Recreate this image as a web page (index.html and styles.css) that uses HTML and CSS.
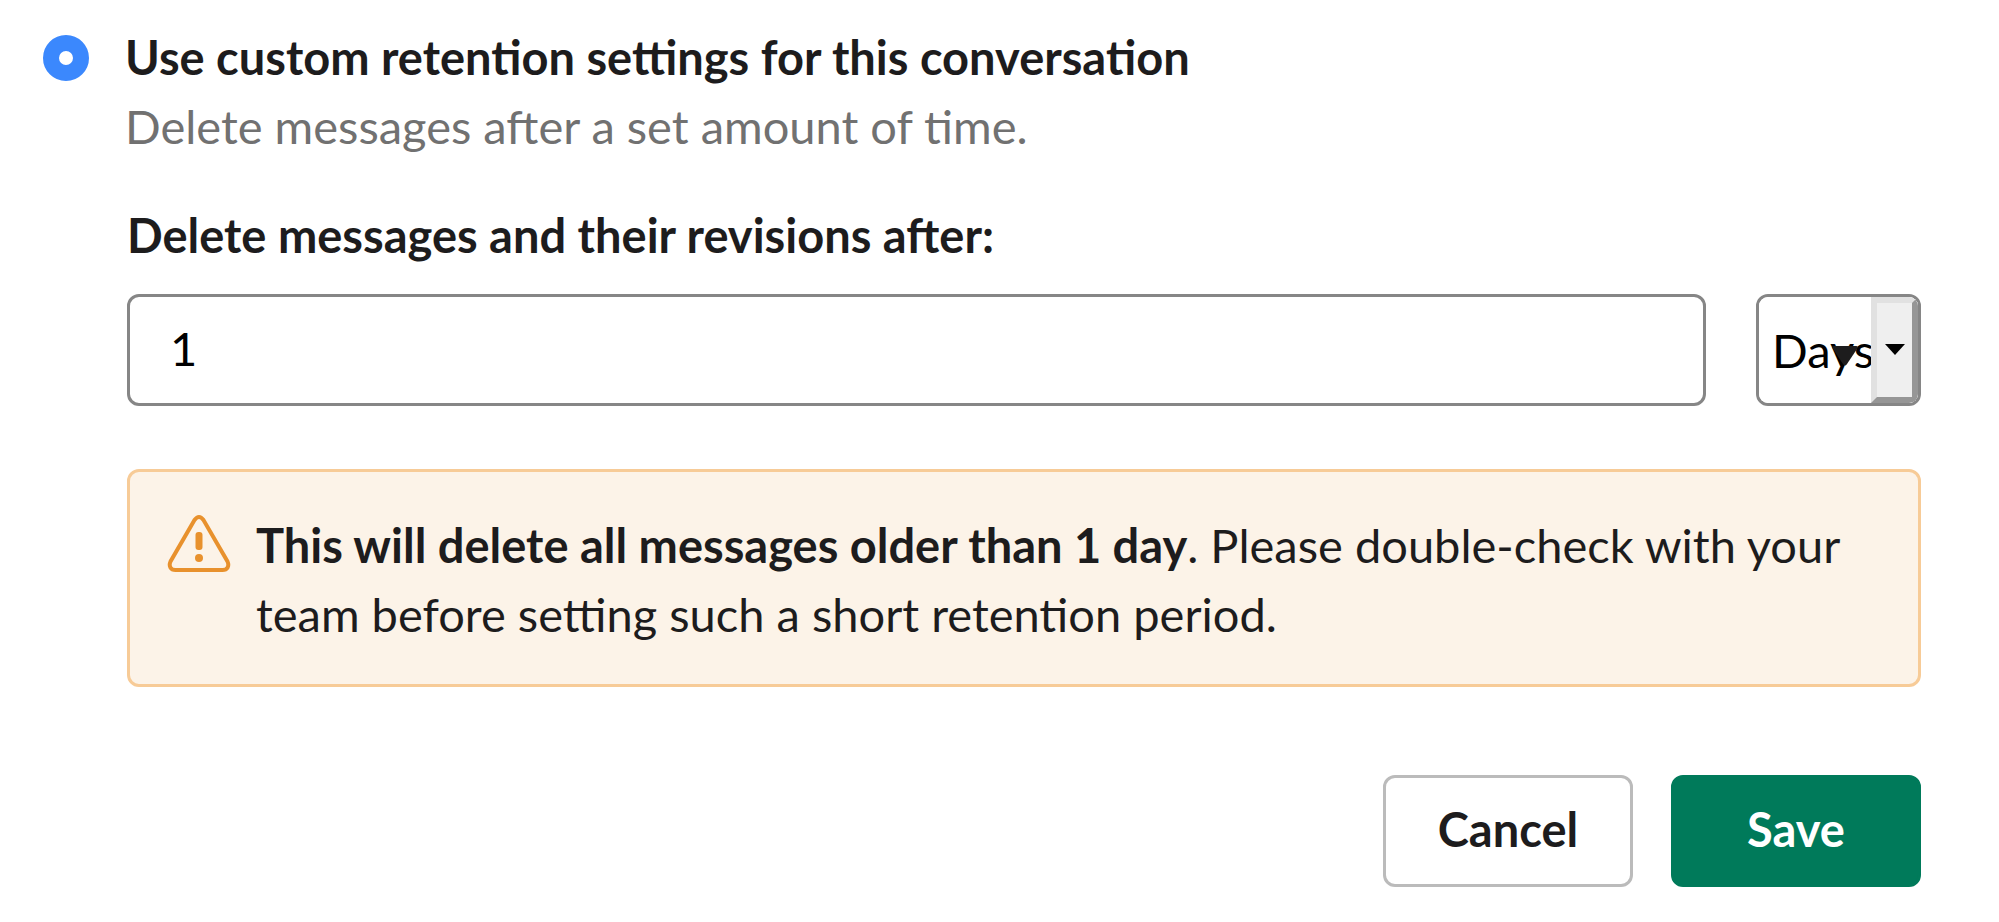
FILE: index.html
```html
<!DOCTYPE html>
<html lang="en">
<head>
<meta charset="utf-8">
<title>Message retention</title>
<link rel="stylesheet" href="styles.css">
</head>
<body>
<form class="retention">
  <input class="radio" type="radio" id="custom" name="policy" checked aria-describedby="custom-hint">
  <div class="option">
    <label class="option-title" for="custom">Use custom retention settings for this conversation</label>
    <p class="option-hint" id="custom-hint">Delete messages after a set amount of time.</p>
  </div>
  <div class="details">
    <label class="field-label" for="amount">Delete messages and their revisions after:</label>
    <div class="fields">
      <input class="amount" type="text" id="amount" value="1">
      <div class="unit">
        <select class="unit-select" aria-label="Unit">
          <option>Days</option>
        </select>
        <span class="unit-button"></span>
        <svg class="unit-caret" viewBox="0 0 26 20" aria-hidden="true"><path d="M2 0H24Q27 0 25 3L15 18Q13 21 11 18L1 3Q-1 0 2 0Z"/></svg>
      </div>
    </div>
    <div class="alert" role="alert">
      <svg class="alert-icon" viewBox="0 0 64 58" aria-hidden="true">
        <path class="alert-outline" d="M27.500 5L3.500 46.500C1.500 51 3.500 55 8.500 55H55.500C60.500 55 62.500 51 60.500 46.500L36.500 5Q32 -1 27.500 5Z"/>
        <rect class="alert-mark" x="28.500" y="17" width="7" height="18" rx="3"/>
        <circle class="alert-mark" cx="32" cy="43" r="4"/>
      </svg>
      <p class="alert-text"><strong>This will delete all messages older than 1 day</strong>. Please double-check with your team before setting such a short retention period.</p>
    </div>
    <div class="actions">
      <button class="button" type="button">Cancel</button>
      <button class="button button-primary" type="submit">Save</button>
    </div>
  </div>
</form>
</body>
</html>
```
FILE: styles.css
```css
* {
  box-sizing: border-box;
}

body {
  margin: 0;
  background: #fff;
  color: #1d1c1d;
  font-family: Lato, "Open Sans", sans-serif;
  font-size: 47px;
  line-height: 69px;
}

p {
  margin: 0;
}

input,
select,
button {
  font: inherit;
}

.retention {
  display: grid;
  grid-template-columns: 46px minmax(0, 1fr);
  column-gap: 36px;
  padding: 23px 78px 32px 43px;
}

.radio {
  appearance: none;
  width: 46px;
  height: 46px;
  margin: 12px 0 0;
  border: 16px solid #3b88fd;
  border-radius: 50%;
  background: #fff;
}

.option-title {
  display: block;
  font-weight: 700;
}

.option-hint {
  color: #717171;
}

.details {
  grid-column: 2;
  padding: 40px 0 0 2px;
}

.field-label {
  display: block;
  font-weight: 700;
}

.fields {
  display: flex;
  gap: 50px;
  margin-top: 24px;
}

.amount {
  flex: 1;
  min-width: 0;
  height: 112px;
  padding: 0 40px 4px;
  border: 3px solid #868686;
  border-radius: 12px;
  background: #fff;
  color: #000;
}

.unit {
  position: relative;
  width: 165px;
  height: 112px;
  overflow: hidden;
  border: 3px solid #868686;
  border-radius: 12px;
}

.unit-select {
  appearance: none;
  width: 100%;
  height: 100%;
  padding: 0 0 0 13px;
  border: 0;
  background: #fff;
  color: #000;
}

.unit-button {
  position: absolute;
  top: 0;
  right: 0;
  bottom: 0;
  width: 47px;
  border: 6px solid;
  border-color: #e1e1e1 #969696 #969696 #e1e1e1;
  background: #efefef;
  pointer-events: none;
}

.unit-button::after {
  content: "";
  position: absolute;
  top: 41px;
  left: 8px;
  border: 10px solid transparent;
  border-top: 11px solid #000;
  border-bottom: 0;
}

.unit-caret {
  position: absolute;
  top: 49px;
  right: 60px;
  width: 26px;
  height: 20px;
  fill: #1d1c1d;
  pointer-events: none;
}

.alert {
  display: flex;
  gap: 25px;
  margin-top: 63px;
  padding: 39px 37px 35px;
  border: 3px solid #f7cb97;
  border-radius: 12px;
  background: #fcf3e8;
}

.alert-icon {
  flex: none;
  width: 64px;
  height: 58px;
  margin-top: 4px;
}

.alert-outline {
  fill: none;
  stroke: #e8912d;
  stroke-width: 4;
}

.alert-mark {
  fill: #e8912d;
}

.actions {
  display: flex;
  justify-content: flex-end;
  gap: 38px;
  margin-top: 88px;
}

.button {
  width: 250px;
  height: 112px;
  padding: 0 0 4px;
  border: 3px solid #bbb;
  border-radius: 12px;
  background: #fff;
  color: #1d1c1d;
  font-weight: 700;
}

.button-primary {
  border-color: #007a5a;
  background: #007a5a;
  color: #fff;
}
```
